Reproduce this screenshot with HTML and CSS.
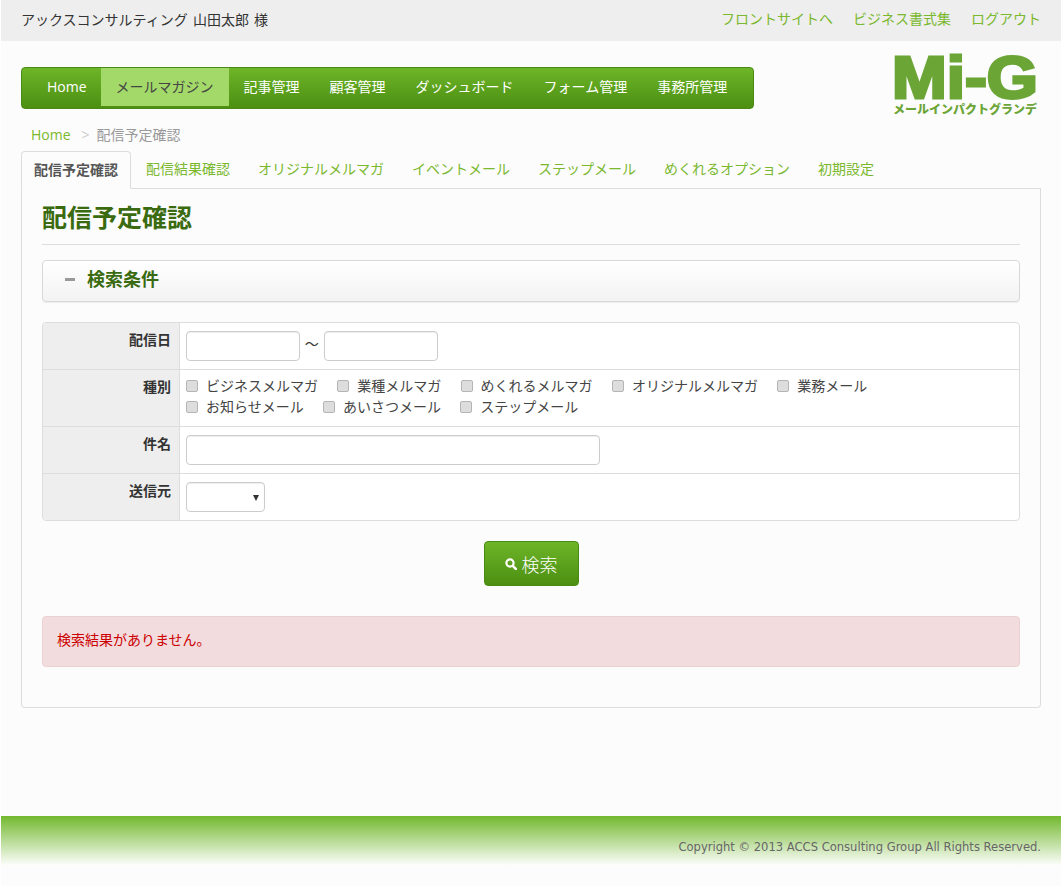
FILE: index.html
```html
<!DOCTYPE html>
<html lang="ja">
<head>
    <meta charset="UTF-8">
    <title>配信予定確認</title>
    <link rel="stylesheet" href="styles.css">
</head>
<body>
    <div id="topbar">
        <div class="user-name">アックスコンサルティング 山田太郎 様</div>
        <div class="top-links">
            <a href="#">フロントサイトへ</a>
            <a href="#">ビジネス書式集</a>
            <a href="#">ログアウト</a>
        </div>
    </div>

    <div id="header">
        <ul class="main-nav">
            <li class="nav-home"><a href="#">Home</a></li>
            <li class="active"><a href="#">メールマガジン</a></li>
            <li><a href="#">記事管理</a></li>
            <li><a href="#">顧客管理</a></li>
            <li><a href="#">ダッシュボード</a></li>
            <li><a href="#">フォーム管理</a></li>
            <li><a href="#">事務所管理</a></li>
        </ul>
        <div class="logo">
            <svg class="logo-mark" width="144" height="60" viewBox="0 0 144 60">
                <text x="-1" y="57" textLength="146" lengthAdjust="spacingAndGlyphs" class="logo-text">Mi-G</text>
            </svg>
            <div class="logo-sub">メールインパクトグランデ</div>
        </div>
    </div>

    <div class="breadcrumb">
        <a href="#">Home</a>
        <span class="divider">&gt;</span>
        <span>配信予定確認</span>
    </div>

    <ul class="tabs">
        <li class="active"><a href="#">配信予定確認</a></li>
        <li><a href="#">配信結果確認</a></li>
        <li><a href="#">オリジナルメルマガ</a></li>
        <li><a href="#">イベントメール</a></li>
        <li><a href="#">ステップメール</a></li>
        <li><a href="#">めくれるオプション</a></li>
        <li><a href="#">初期設定</a></li>
    </ul>

    <div class="panel">
        <h1 class="page-title">配信予定確認</h1>

        <div class="accordion">
            <span class="minus"></span>
            <span class="accordion-title">検索条件</span>
        </div>

        <table class="search-table">
            <tr class="date-row">
                <th>配信日</th>
                <td>
                    <input type="text" class="date-input">
                    <span class="tilde">～</span>
                    <input type="text" class="date-input">
                </td>
            </tr>
            <tr>
                <th>種別</th>
                <td class="check-cell">
                    <div class="check-row">
                        <label><input type="checkbox">ビジネスメルマガ</label>
                        <label><input type="checkbox">業種メルマガ</label>
                        <label><input type="checkbox">めくれるメルマガ</label>
                        <label><input type="checkbox">オリジナルメルマガ</label>
                        <label><input type="checkbox">業務メール</label>
                    </div>
                    <div class="check-row">
                        <label><input type="checkbox">お知らせメール</label>
                        <label><input type="checkbox">あいさつメール</label>
                        <label><input type="checkbox">ステップメール</label>
                    </div>
                </td>
            </tr>
            <tr>
                <th>件名</th>
                <td><input type="text" class="subject-input"></td>
            </tr>
            <tr>
                <th>送信元</th>
                <td><div class="select-wrap"><select></select></div></td>
            </tr>
        </table>

        <div class="button-row">
            <button class="search-btn">
                <svg width="12" height="12" viewBox="0 0 12 12">
                    <circle cx="5" cy="5" r="3.6" fill="none" stroke="#fff" stroke-width="2.2"/>
                    <path d="M7.8 7.8 L10.8 10.8" stroke="#fff" stroke-width="2.6" stroke-linecap="round"/>
                </svg>
                <span>検索</span>
            </button>
        </div>

        <div class="alert">検索結果がありません。</div>
    </div>

    <div id="footer">Copyright © 2013 ACCS Consulting Group All Rights Reserved.</div>
</body>
</html>
```

FILE: styles.css
```css
* {
    box-sizing: border-box;
}

body {
    margin: 0;
    padding: 0;
    background-color: #fcfcfc;
    border-left: 1px solid #fff;
    border-right: 1px solid #fff;
    font-family: "Open Sans", "Noto Sans CJK JP", sans-serif;
    font-size: 14px;
    line-height: 20px;
    color: #333;
    height: 886px;
    overflow: hidden;
}

a {
    text-decoration: none;
    color: #7ab82d;
}

ul {
    list-style: none;
    margin: 0;
    padding: 0;
}

#topbar {
    display: flex;
    justify-content: space-between;
    align-items: center;
    height: 41px;
    padding: 0 20px;
    background-color: #eee;
}

.user-name {
    padding-bottom: 2px;
    word-spacing: 1.5px;
}

.top-links {
    display: flex;
    gap: 20px;
    padding-bottom: 4px;
}

#header {
    display: flex;
    justify-content: space-between;
    padding: 26px 24px 0 20px;
    height: 84px;
}

.main-nav {
    display: flex;
    width: 733px;
    height: 42px;
    padding-left: 1px;
    background: linear-gradient(to bottom, #6db528, #4c8f12);
    border: 1px solid #4a8a14;
    border-radius: 4px;
}

.main-nav a {
    display: block;
    line-height: 38px;
    padding: 0 15px;
    color: #fff;
}

.main-nav .nav-home a {
    padding: 0 14px 0 24px;
}

.main-nav .active a {
    padding: 0 15px;
    background-color: #a2d968;
    color: #444;
}

.main-nav li {
    flex: none;
}

.logo {
    margin-top: -26px;
    width: 144px;
}

.logo-mark {
    display: block;
    height: 60px;
    overflow: visible;
}

.logo-text {
    font-family: "Liberation Sans", sans-serif;
    font-weight: bold;
    font-size: 59px;
    fill: #6ba536;
    stroke: #6ba536;
    stroke-width: 3px;
}

.logo-sub {
    font-family: "Noto Sans CJK JP", sans-serif;
    font-size: 12px;
    font-weight: 900;
    line-height: 16px;
    color: #6ba536;
    white-space: nowrap;
}

.breadcrumb {
    display: flex;
    gap: 7px;
    height: 26px;
    padding-left: 30px;
    color: #999;
}

.breadcrumb .divider {
    margin-left: 4px;
    color: #ccc;
}

.tabs {
    display: flex;
    margin: 0 20px;
    height: 38px;
    border-bottom: 1px solid #ddd;
}

.tabs a {
    display: block;
    height: 37px;
    padding: 8px 14px;
}

.tabs li.active {
    margin-right: 1px;
}

.tabs li.active a {
    height: 38px;
    padding: 8px 12px;
    color: #555;
    font-weight: bold;
    background-color: #fcfcfc;
    border: 1px solid #ddd;
    border-bottom-color: #fcfcfc;
    border-radius: 4px 4px 0 0;
}

.panel {
    height: 519px;
    margin: 0 20px;
    padding: 0 20px;
    border: 1px solid #ddd;
    border-top: none;
    border-radius: 0 0 4px 4px;
}

.page-title {
    margin: 0 0 15px;
    height: 56px;
    padding-top: 13px;
    font-size: 25px;
    line-height: 30px;
    font-weight: bold;
    color: #3a6b10;
    border-bottom: 1px solid #ddd;
}

.accordion {
    display: flex;
    align-items: center;
    height: 42px;
    padding: 0 0 4px 22px;
    background: linear-gradient(to bottom, #fff, #f3f3f3);
    border: 1px solid #d8d8d8;
    border-radius: 4px;
    box-shadow: 0 1px 1px #eee;
}

.minus {
    width: 10px;
    height: 3px;
    margin-right: 12px;
    background-color: #999;
}

.accordion-title {
    font-size: 18px;
    font-weight: bold;
    color: #3a6b10;
}

.search-table {
    width: 978px;
    margin-top: 20px;
    border-collapse: separate;
    border-spacing: 0;
    border: 1px solid #ddd;
    border-radius: 4px;
    background-color: #fff;
}

.search-table th {
    width: 137px;
    padding: 7px 8px 0 0;
    background-color: #eee;
    border-right: 1px solid #ddd;
    text-align: right;
    vertical-align: top;
    font-size: 14px;
}

.search-table td {
    padding: 8px 6px 8px 6px;
    height: 47px;
    vertical-align: top;
}

.search-table .date-row td {
    height: 46px;
}

.search-table tr + tr th,
.search-table tr + tr td {
    border-top: 1px solid #ddd;
}

.search-table tr:first-child th {
    border-top-left-radius: 4px;
}

.search-table tr:last-child th {
    border-bottom-left-radius: 4px;
}

input[type="text"],
select {
    height: 30px;
    background-color: #fff;
    border: 1px solid #ccc;
    border-radius: 4px;
    box-shadow: inset 0 1px 1px #eee;
    vertical-align: top;
}

.date-input {
    width: 114px;
}

.tilde {
    display: inline-block;
    width: 14px;
    margin: 0 2px 0 1px;
    line-height: 26px;
    vertical-align: top;
}

.subject-input {
    width: 414px;
}

.select-wrap {
    position: relative;
    width: 79px;
}

select {
    width: 79px;
    appearance: none;
}

.select-wrap::after {
    content: "";
    position: absolute;
    top: 13px;
    right: 6px;
    border-left: 3px solid transparent;
    border-right: 3px solid transparent;
    border-top: 6px solid #333;
}

.search-table .check-cell {
    padding: 5px 6px 9px;
}

.check-row {
    display: flex;
    gap: 19.3px;
    height: 21px;
    white-space: nowrap;
}

.check-row label {
    display: flex;
    align-items: center;
    color: #444;
}

.check-row input {
    appearance: none;
    width: 12px;
    height: 12px;
    margin: 0 8px 0 0;
    background-color: #ddd;
    border: 1px solid #b5b5b5;
    border-radius: 2px;
}

.button-row {
    display: flex;
    justify-content: center;
    margin-top: 20px;
}

.search-btn {
    display: flex;
    align-items: center;
    justify-content: center;
    gap: 5px;
    width: 95px;
    height: 45px;
    padding: 0;
    background: linear-gradient(to bottom, #6db528, #4c8f12);
    border: 1px solid #4a8a14;
    border-radius: 4px;
    color: #fff;
    font-family: inherit;
    font-size: 18px;
    font-weight: 300;
}

.alert {
    display: flex;
    align-items: center;
    height: 51px;
    margin-top: 30px;
    padding: 0 0 3px 14px;
    background-color: #f2dcde;
    border: 1px solid #ebd0d4;
    border-radius: 4px;
    color: #cc0000;
    font-size: 14px;
}

#footer {
    height: 50px;
    margin-top: 108px;
    padding: 21px 20px 0 0;
    background: linear-gradient(to bottom, #72b82e, #fff);
    text-align: right;
    color: #666;
    font-family: "DejaVu Sans", sans-serif;
    font-size: 11.55px;
}
```
